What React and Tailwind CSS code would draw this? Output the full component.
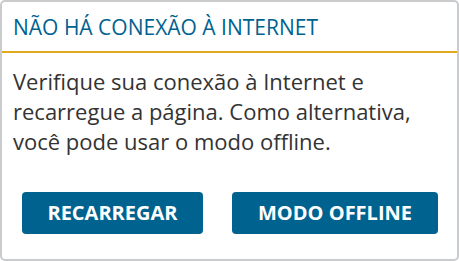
export default function App() {
  return (
    <div className="w-[459px] h-[261px] bg-white" style={{ fontFamily: '"Open Sans", sans-serif' }}>
      <div className="w-full h-full border-2 border-[#c9cbcd] rounded-[5px] flex flex-col bg-white">
        <div className="h-[51px] flex items-center pl-[11px] border-b-2 border-[#e0a91f]">
          <h1 className="text-[21px] leading-none text-[#00628f] pt-[2px]">NÃO HÁ CONEXÃO À INTERNET</h1>
        </div>
        <p className="pl-[11px] pr-[8px] pt-[13px] text-[22px] leading-[30px] text-[#333333]">
          Verifique sua conexão à Internet e recarregue a página. Como alternativa, você pode usar o modo offline.
        </p>
        <div className="flex pl-[20px] pt-[36px] gap-[29px]">
          <button className="w-[181px] h-[42px] rounded-[4px] bg-[#00628f] text-white font-bold text-[20px]">RECARREGAR</button>
          <button className="w-[206px] h-[42px] rounded-[4px] bg-[#00628f] text-white font-bold text-[20px]">MODO OFFLINE</button>
        </div>
      </div>
    </div>
  );
}
